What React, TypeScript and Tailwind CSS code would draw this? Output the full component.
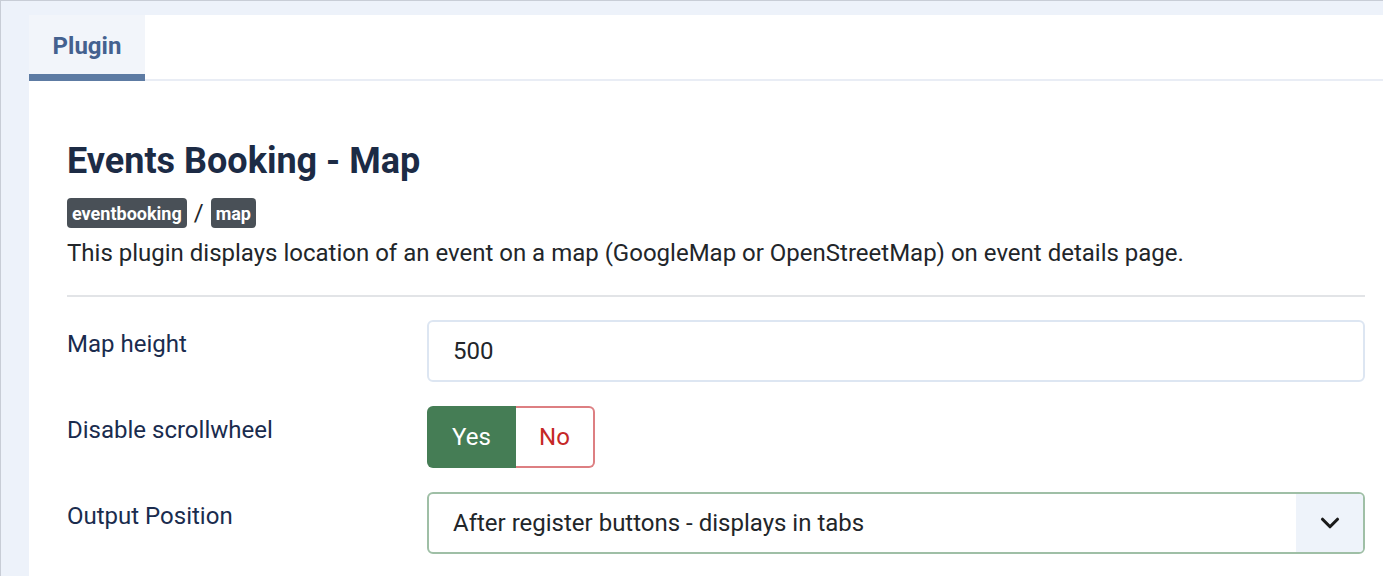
import { ChevronDown } from "lucide-react";

const font = { fontFamily: "Roboto, 'Liberation Sans', sans-serif" };

function Row({ label, children }: { label: string; children: React.ReactNode }) {
  return (
    <div className="flex items-start mb-[24px]">
      <div className="w-[360px] pt-[10px] text-[24px] leading-[28px] text-[#1a2c4e]">
        {label}
      </div>
      <div className="flex-1">{children}</div>
    </div>
  );
}

export default function App() {
  return (
    <div
      className="min-h-[576px] bg-[#edf2fa] border-t border-l border-[#c8cdd6] pt-[14px] pl-[28px] overflow-hidden"
      style={font}
    >
      <div className="bg-white min-h-[562px]">
        <div className="flex border-b-2 border-[#e9edf5]">
          <button className="relative -mb-[2px] h-[66px] w-[116px] bg-[#f2f5fa] text-[24px] leading-[28px] font-bold text-[#44618f] pt-[2px] border-b-[7px] border-[#5d7ba3]">
            Plugin
          </button>
        </div>

        <div className="pl-[38px] pr-[18px] pt-[60px]">
          <h1 className="text-[36px] leading-[40px] font-bold text-[#1c2b45]">
            Events Booking - Map
          </h1>
          <div className="flex items-center gap-[7px] mt-[17px]">
            <span className="rounded-[4px] bg-[#495057] px-[5px] h-[30px] flex items-center text-[18px] font-bold text-white">
              eventbooking
            </span>
            <span className="text-[24px] leading-[30px] text-[#22262a]">/</span>
            <span className="rounded-[4px] bg-[#495057] px-[5px] h-[30px] flex items-center text-[18px] font-bold text-white">
              map
            </span>
          </div>
          <p className="mt-[7px] text-[24px] leading-[36px] text-[#22262a]">
            This plugin displays location of an event on a map (GoogleMap or OpenStreetMap) on event details page.
          </p>
          <div className="mt-[24px] mb-[23px] h-[2px] bg-[#e2e4e7]" />

          <Row label="Map height">
            <div className="h-[62px] rounded-[6px] border-2 border-[#dde6f2] flex items-center px-[24px] text-[24px] text-[#22262a]">
              500
            </div>
          </Row>

          <Row label="Disable scrollwheel">
            <div className="flex h-[62px] w-[168px]">
              <div className="w-[89px] rounded-l-[6px] bg-[#457d55] flex items-center justify-center text-[24px] text-white">
                Yes
              </div>
              <div className="flex-1 rounded-r-[6px] border-2 border-l-0 border-[#dd7f82] flex items-center justify-center text-[24px] text-[#c52827]">
                No
              </div>
            </div>
          </Row>

          <Row label="Output Position">
            <div className="h-[62px] rounded-[6px] border-2 border-[#9fbfa6] flex overflow-hidden">
              <div className="flex-1 flex items-center px-[24px] text-[24px] text-[#22262a]">
                After register buttons - displays in tabs
              </div>
              <div className="w-[67px] bg-[#eef3fa] flex items-center justify-center">
                <ChevronDown size={30} strokeWidth={2.5} color="#1a1a1a" />
              </div>
            </div>
          </Row>
        </div>
      </div>
    </div>
  );
}
